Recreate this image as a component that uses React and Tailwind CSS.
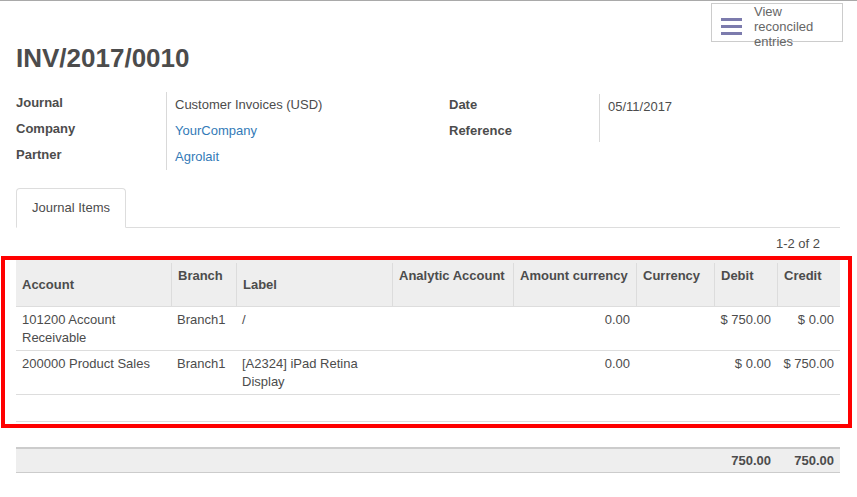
import React from "react";

const cols = "grid grid-cols-[155px_65px_156px_121px_123px_78px_63px_63px]";

const rows = [
  {
    account: ["101200 Account", "Receivable"],
    branch: "Branch1",
    label: ["/"],
    amount: "0.00",
    debit: "$ 750.00",
    credit: "$ 0.00",
  },
  {
    account: ["200000 Product Sales"],
    branch: "Branch1",
    label: ["[A2324] iPad Retina", "Display"],
    amount: "0.00",
    debit: "$ 0.00",
    credit: "$ 750.00",
  },
];

const Field = ({ label, value, link }) => (
  <div className="flex h-[26px]">
    <div className="w-[150px] pt-[2px] font-bold">{label}</div>
    <div
      className={`flex-1 border-l border-[#d9d9d9] pl-[8px] pt-[4px] ${
        link ? "text-[#337ab7]" : ""
      }`}
    >
      {value}
    </div>
  </div>
);

const App = () => {
  return (
    <div className="relative h-[497px] w-full overflow-hidden border-t border-[#a9a9a9] bg-white pl-[16px] pr-[17px] font-['Liberation_Sans',Arial,sans-serif] text-[13px] leading-[18px] text-[#4c4c4c]">
      {/* Button box */}
      <div className="-mr-[3px] mt-[2px] flex justify-end">
        <button className="flex h-[39px] w-[132px] items-start gap-[12px] border border-[#cccccc] bg-white pl-[9px] text-left">
          <svg width="21" height="17" viewBox="0 0 21 17" className="mt-[14px] shrink-0">
            <rect x="0" y="0" width="21" height="3" fill="#7c7bad" />
            <rect x="0" y="7" width="21" height="3" fill="#7c7bad" />
            <rect x="0" y="14" width="21" height="3" fill="#7c7bad" />
          </svg>
          <span className="block leading-[15px] text-[#666666]">
            View
            <br />
            reconciled
            <br />
            entries
          </span>
        </button>
      </div>

      {/* Title */}
      <h1 className="mt-[1px] text-[26px] font-bold leading-[30px] text-[#4c4c4c]">
        INV/2017/0010
      </h1>

      {/* Fields */}
      <div className="mt-[19px] flex">
        <div className="w-[433px]">
          <Field label="Journal" value="Customer Invoices (USD)" />
          <Field label="Company" value="YourCompany" link />
          <Field label="Partner" value="Agrolait" link />
        </div>
        <div className="mt-[2px] w-[260px]">
          <div className="flex h-[26px]">
            <div className="w-[150px] pt-[2px] font-bold">Date</div>
            <div className="flex-1 border-l border-[#d9d9d9] pl-[8px] pt-[4px]">
              05/11/2017
            </div>
          </div>
          <div className="flex h-[22px]">
            <div className="w-[150px] pt-[2px] font-bold">Reference</div>
            <div className="flex-1 border-l border-[#d9d9d9]"></div>
          </div>
        </div>
      </div>

      {/* Tabs */}
      <div className="mt-[18px] flex border-b border-[#dddddd]">
        <div className="-mb-px flex h-[40px] items-center rounded-t-[4px] border border-[#dddddd] border-b-white bg-white px-[15px]">
          Journal Items
        </div>
      </div>

      {/* Pager */}
      <div className="flex h-[31px] items-center justify-end pr-[20px]">1-2 of 2</div>

      {/* Table */}
      <div>
        <div className="h-[47px] bg-[#eeeeee] pt-[4px] font-bold">
          <div className={`${cols} h-full`}>
            <div className="flex items-center pl-[6px]">Account</div>
            <div className="border-l border-[#dcdcdc] pl-[6px] pt-[4px]">Branch</div>
            <div className="flex items-center border-l border-[#dcdcdc] pl-[6px]">Label</div>
            <div className="border-l border-[#dcdcdc] pl-[6px] pt-[4px] whitespace-nowrap">
              Analytic Account
            </div>
            <div className="border-l border-[#dcdcdc] pl-[6px] pt-[4px] whitespace-nowrap">
              Amount currency
            </div>
            <div className="border-l border-[#dcdcdc] pl-[6px] pt-[4px]">Currency</div>
            <div className="border-l border-[#dcdcdc] pl-[6px] pt-[4px]">Debit</div>
            <div className="border-l border-[#dcdcdc] pl-[6px] pt-[4px]">Credit</div>
          </div>
        </div>
        {rows.map((r, i) => (
          <div key={i} className={`${cols} h-[44px] border-t border-[#dddddd] pt-[4px]`}>
            <div className="pl-[6px]">
              {r.account.map((t) => (
                <div key={t}>{t}</div>
              ))}
            </div>
            <div className="pl-[6px]">{r.branch}</div>
            <div className="pl-[6px]">
              {r.label.map((t) => (
                <div key={t}>{t}</div>
              ))}
            </div>
            <div></div>
            <div className="pr-[6px] text-right">{r.amount}</div>
            <div></div>
            <div className="pr-[6px] text-right whitespace-nowrap">{r.debit}</div>
            <div className="pr-[6px] text-right whitespace-nowrap">{r.credit}</div>
          </div>
        ))}
        <div className="h-[28px] border-y border-[#dddddd]"></div>
      </div>

      {/* Totals */}
      <div className="mt-[25px] h-[26px] border-t-2 border-b border-[#cccccc] bg-[#eeeeee] font-bold">
        <div className={`${cols} h-full items-center`}>
          <div></div>
          <div></div>
          <div></div>
          <div></div>
          <div></div>
          <div></div>
          <div className="pr-[6px] text-right">750.00</div>
          <div className="pr-[6px] text-right">750.00</div>
        </div>
      </div>

      {/* Annotation box */}
      <div className="pointer-events-none absolute left-[1px] top-[255px] h-[172px] w-[851px] border-4 border-[#ff0000]"></div>
    </div>
  );
};

export default App;
